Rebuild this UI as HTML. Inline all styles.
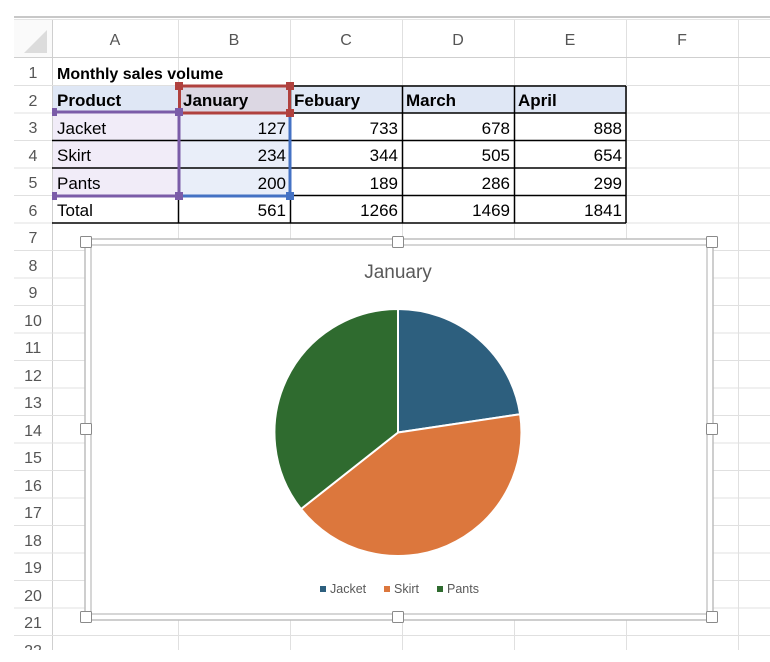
<!DOCTYPE html>
<html><head><meta charset="utf-8"><style>
html,body{margin:0;padding:0;background:#fff;width:770px;height:662px;overflow:hidden}
svg{display:block;font-family:"Liberation Sans",sans-serif}
</style></head><body>
<svg width="770" height="662" viewBox="0 0 770 662" xmlns="http://www.w3.org/2000/svg">
<rect x="14" y="16" width="756" height="2" fill="#c8c8c8"/>
<rect x="14" y="19" width="756" height="1" fill="#e4e4e4"/>
<rect x="14" y="20" width="38" height="38" fill="#fafafa"/>
<polygon points="24,53 47,53 47,30" fill="#dcdcdc"/>
<rect x="52" y="86" width="127" height="27" fill="#dfe7f5"/>
<rect x="179" y="86" width="111" height="27" fill="#dcd7e3"/>
<rect x="290" y="86" width="336" height="27" fill="#dfe7f5"/>
<rect x="52" y="113" width="127" height="83" fill="#f1ecf8"/>
<rect x="179" y="113" width="111" height="83" fill="#e9eef9"/>
<g stroke="#e0e0e0" stroke-width="1">
<line x1="52.5" y1="20" x2="52.5" y2="662" stroke="#cfcfcf"/>
<line x1="178.5" y1="20" x2="178.5" y2="662"/>
<line x1="290.5" y1="20" x2="290.5" y2="662"/>
<line x1="402.5" y1="20" x2="402.5" y2="662"/>
<line x1="514.5" y1="20" x2="514.5" y2="662"/>
<line x1="626.5" y1="20" x2="626.5" y2="662"/>
<line x1="738.5" y1="20" x2="738.5" y2="662"/>
<line x1="14" y1="57.5" x2="770" y2="57.5" stroke="#cfcfcf"/>
<line x1="14" y1="85.5" x2="770" y2="85.5"/>
<line x1="14" y1="113" x2="770" y2="113"/>
<line x1="14" y1="140.5" x2="770" y2="140.5"/>
<line x1="14" y1="168" x2="770" y2="168"/>
<line x1="14" y1="195.5" x2="770" y2="195.5"/>
<line x1="14" y1="223" x2="770" y2="223"/>
<line x1="14" y1="250.5" x2="770" y2="250.5"/>
<line x1="14" y1="278" x2="770" y2="278"/>
<line x1="14" y1="305.5" x2="770" y2="305.5"/>
<line x1="14" y1="333" x2="770" y2="333"/>
<line x1="14" y1="360.5" x2="770" y2="360.5"/>
<line x1="14" y1="388" x2="770" y2="388"/>
<line x1="14" y1="415.5" x2="770" y2="415.5"/>
<line x1="14" y1="443" x2="770" y2="443"/>
<line x1="14" y1="470.5" x2="770" y2="470.5"/>
<line x1="14" y1="498" x2="770" y2="498"/>
<line x1="14" y1="525.5" x2="770" y2="525.5"/>
<line x1="14" y1="553" x2="770" y2="553"/>
<line x1="14" y1="580.5" x2="770" y2="580.5"/>
<line x1="14" y1="608" x2="770" y2="608"/>
<line x1="14" y1="635.5" x2="770" y2="635.5"/>
</g>
<g fill="#555" font-size="16" text-anchor="middle">
<text x="115" y="45">A</text><text x="234" y="45">B</text><text x="346" y="45">C</text>
<text x="458" y="45">D</text><text x="570" y="45">E</text><text x="682" y="45">F</text>
</g>
<g fill="#555" font-size="16" text-anchor="middle">
<text x="33" y="78">1</text><text x="33" y="106">2</text><text x="33" y="133">3</text>
<text x="33" y="161">4</text><text x="33" y="188">5</text><text x="33" y="216">6</text>
<text x="33" y="243">7</text><text x="33" y="271">8</text><text x="33" y="298">9</text>
<text x="33" y="326">10</text><text x="33" y="353">11</text><text x="33" y="381">12</text>
<text x="33" y="408">13</text><text x="33" y="436">14</text><text x="33" y="463">15</text>
<text x="33" y="491">16</text><text x="33" y="518">17</text><text x="33" y="546">18</text>
<text x="33" y="573">19</text><text x="33" y="601">20</text><text x="33" y="628">21</text>
<text x="33" y="656">22</text>
</g>
<g stroke="#000" stroke-width="1.5">
<line x1="290" y1="86" x2="626" y2="86"/>
<line x1="290" y1="113" x2="626" y2="113"/>
<line x1="52" y1="140.5" x2="626" y2="140.5"/>
<line x1="52" y1="168" x2="626" y2="168"/>
<line x1="290" y1="195.5" x2="626" y2="195.5"/>
<line x1="52" y1="223" x2="626" y2="223"/>
<line x1="402.5" y1="86" x2="402.5" y2="223"/>
<line x1="514.5" y1="86" x2="514.5" y2="223"/>
<line x1="626" y1="86" x2="626" y2="223"/>
<line x1="178.5" y1="196" x2="178.5" y2="223"/>
<line x1="290.5" y1="196" x2="290.5" y2="223"/>
<line x1="290.5" y1="86" x2="290.5" y2="113"/>
</g>
<g font-size="17" fill="#000">
<text x="57" y="79" font-weight="bold" font-size="16">Monthly sales volume</text>
<g font-weight="bold"><text x="57" y="106">Product</text><text x="183" y="106">January</text><text x="294" y="106">Febuary</text><text x="406" y="106">March</text><text x="518" y="106">April</text></g>
<text x="57" y="134">Jacket</text><text x="57" y="161">Skirt</text><text x="57" y="189">Pants</text><text x="57" y="216">Total</text>
<g text-anchor="end">
<text x="286" y="134">127</text><text x="398" y="134">733</text><text x="510" y="134">678</text><text x="622" y="134">888</text>
<text x="286" y="161">234</text><text x="398" y="161">344</text><text x="510" y="161">505</text><text x="622" y="161">654</text>
<text x="286" y="189">200</text><text x="398" y="189">189</text><text x="510" y="189">286</text><text x="622" y="189">299</text>
<text x="286" y="216">561</text><text x="398" y="216">1266</text><text x="510" y="216">1469</text><text x="622" y="216">1841</text>
</g></g>
<rect x="179.5" y="86" width="110" height="27" fill="none" stroke="#b0413e" stroke-width="3"/>
<g fill="#b0413e"><rect x="175" y="82" width="8" height="8"/><rect x="286" y="82" width="8" height="8"/><rect x="286" y="109" width="8" height="8"/></g>
<g stroke="#7b5ca8" stroke-width="3"><line x1="53" y1="112" x2="179" y2="112"/><line x1="53" y1="196" x2="179" y2="196"/><line x1="179" y1="112" x2="179" y2="196"/></g>
<g fill="#7b5ca8"><rect x="52" y="108" width="5" height="8"/><rect x="175" y="108" width="8" height="8"/><rect x="52" y="192" width="5" height="8"/><rect x="175" y="192" width="8" height="8"/></g>
<g stroke="#4472c4" stroke-width="3"><line x1="290" y1="117" x2="290" y2="196"/><line x1="183" y1="196" x2="290" y2="196"/></g>
<rect x="286" y="192" width="8" height="8" fill="#4472c4"/>
<rect x="85" y="239" width="628" height="381" fill="#fff" stroke="#bdbdbd" stroke-width="1.5"/>
<rect x="91" y="245" width="616" height="369" fill="#fff" stroke="#c8c8c8" stroke-width="1.5"/>
<g fill="#fff" stroke="#8a8a8a" stroke-width="1">
<rect x="80.5" y="236.5" width="11" height="11" rx="1"/><rect x="392.5" y="236.5" width="11" height="11" rx="1"/><rect x="706.5" y="236.5" width="11" height="11" rx="1"/>
<rect x="80.5" y="423.5" width="11" height="11" rx="1"/><rect x="706.5" y="423.5" width="11" height="11" rx="1"/>
<rect x="80.5" y="611.5" width="11" height="11" rx="1"/><rect x="392.5" y="611.5" width="11" height="11" rx="1"/><rect x="706.5" y="611.5" width="11" height="11" rx="1"/>
</g>
<text x="398" y="278" text-anchor="middle" font-size="19" fill="#595959">January</text>
<g stroke="#fff" stroke-width="2">
<path d="M398,432.5 L398,309 A123.5,123.5 0 0,1 520.1,414.2 Z" fill="#2d5f7e"/>
<path d="M398,432.5 L520.1,414.2 A123.5,123.5 0 0,1 301,509 Z" fill="#dc773d"/>
<path d="M398,432.5 L301,509 A123.5,123.5 0 0,1 398,309 Z" fill="#2f6b2f"/>
</g>
<g font-size="12.5" fill="#595959">
<rect x="320" y="586" width="6" height="6" fill="#2d5f7e"/><text x="330" y="593">Jacket</text>
<rect x="384" y="586" width="6" height="6" fill="#dc773d"/><text x="394" y="593">Skirt</text>
<rect x="437" y="586" width="6" height="6" fill="#2f6b2f"/><text x="447" y="593">Pants</text>
</g>
<rect x="0" y="650" width="770" height="12" fill="#fff"/>
</svg>
</body></html>
